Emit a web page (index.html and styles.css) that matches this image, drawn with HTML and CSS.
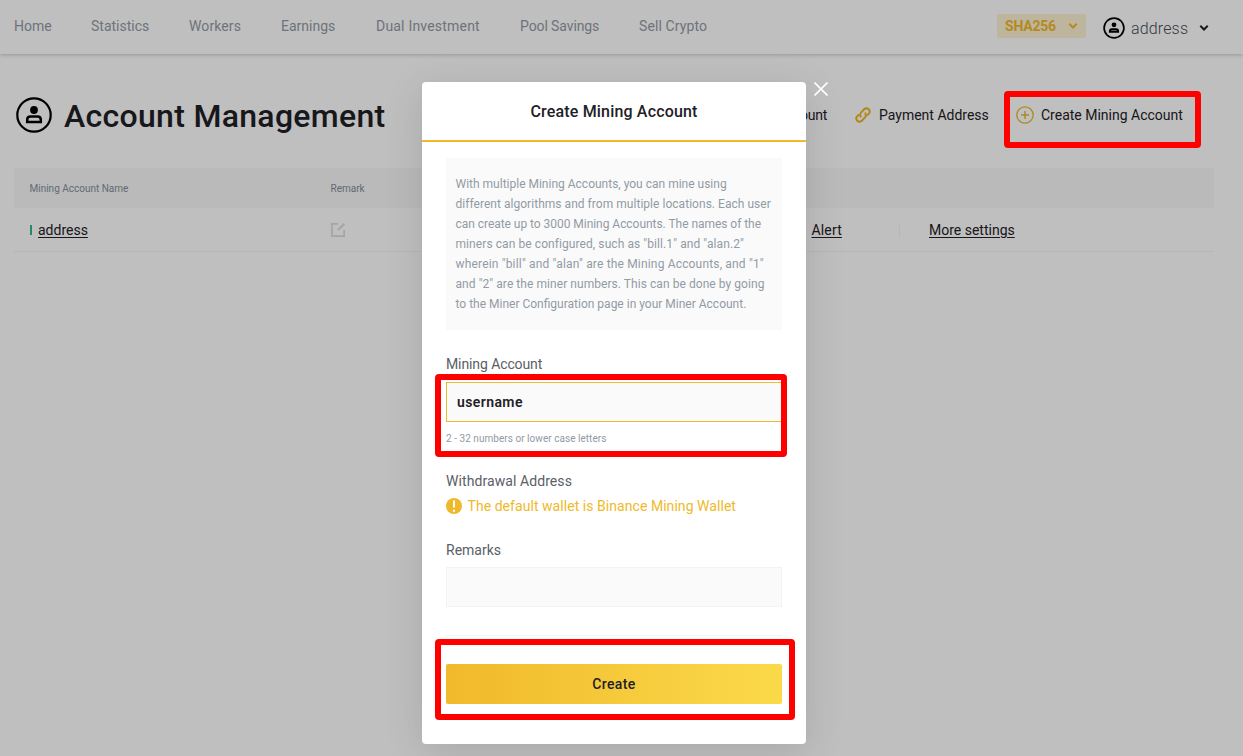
FILE: index.html
```html
<!DOCTYPE html>
<html lang="en">
<head>
<meta charset="utf-8">
<title>Account Management</title>
<link rel="stylesheet" href="styles.css">
</head>
<body>
<svg class="defs" width="0" height="0">
  <symbol id="user" viewBox="0 0 36 36"><circle cx="18" cy="18" r="16.7" fill="none" stroke="#000" stroke-width="2.2"/><circle cx="18" cy="13" r="3.9"/><path d="M11.200 24.900v-2.100c0-2 1.500-3.200 3.400-3.200h6.800c1.900 0 3.400 1.200 3.400 3.200v2.100z" fill="none" stroke="#000" stroke-width="2.500"/></symbol>
  <symbol id="user-small" viewBox="0 0 22 22"><circle cx="11" cy="11" r="9.9" fill="none" stroke="#000" stroke-width="1.7"/><circle cx="11" cy="7.800" r="2.400"/><path d="M6.900 14.800v-.6c0-1.200.9-1.900 2-1.900h4.200c1.100 0 2 .7 2 1.900v.6z" fill="none" stroke="#000" stroke-width="2"/></symbol>
  <symbol id="chevron" viewBox="0 0 10 8"><path d="M1.300 1.800 5 5.500l3.700-3.700" fill="none" stroke="currentColor" stroke-width="2"/></symbol>
</svg>
<div class="page">
  <header class="topbar">
    <nav class="nav">
      <a class="n-home">Home</a><a class="n-stat">Statistics</a><a class="n-work">Workers</a><a class="n-earn">Earnings</a><a class="n-dual">Dual Investment</a><a class="n-pool">Pool Savings</a><a class="n-sell">Sell Crypto</a>
    </nav>
    <div class="algo"><span>SHA256</span><svg width="10" height="8"><use href="#chevron"/></svg></div>
    <div class="user"><svg width="22" height="22"><use href="#user-small"/></svg><span class="user-name">address</span><svg class="user-chev" width="10" height="8"><use href="#chevron"/></svg></div>
  </header>
  <main class="main">
    <div class="heading">
      <svg width="36" height="36"><use href="#user"/></svg>
      <h1>Account Management</h1>
      <div class="actions">
        <a class="act-first">Account</a>
        <a class="act-pay"><svg width="18" height="18" viewBox="0 0 18 18" fill="none" stroke="#ecb41c" stroke-width="2"><path d="M7.200 11.200a3.400 3.400 0 0 1 0-4.800L10.400 3.100a3.200 3.200 0 0 1 4.500 4.500L12.900 9.600"/><path d="M10.800 6.800a3.400 3.400 0 0 1 0 4.800L7.600 14.900a3.200 3.200 0 0 1-4.500-4.500L5.100 8.400"/></svg><span>Payment Address</span></a>
        <a class="act-create"><svg width="18" height="18" viewBox="0 0 18 18" fill="none" stroke="#e8b931"><circle cx="9" cy="9" r="8.2" stroke-width="1.3"/><path d="M9 5v8M5 9h8" stroke-width="1.500"/></svg><span>Create Mining Account</span></a>
      </div>
    </div>
    <div class="thead"><span class="th-name">Mining Account Name</span><span class="th-remark">Remark</span></div>
    <div class="row">
      <div class="cell-name"><i class="status"></i><a class="link l-address">address</a></div>
      <div class="cell-remark"><svg width="14" height="14" viewBox="0 0 14 14" fill="none" stroke="#dcdcdc" stroke-width="1.700"><path d="M7 .9H.9v12.200h12.200V7"/><path d="m7 7 6.400-6.400" stroke-width="2"/></svg></div>
      <div class="cell-alert"><a class="link l-alert">Alert</a></div>
      <div class="cell-more"><a class="link l-more">More settings</a></div>
    </div>
  </main>
</div>
<div class="overlay">
  <section class="modal">
    <svg class="close" width="14" height="14" viewBox="0 0 14 14"><path d="m.5.500 13 13M13.500.500l-13 13" stroke="#fff" stroke-width="1.600"/></svg>
    <h2 class="modal-title"><span>Create Mining Account</span></h2>
    <div class="modal-body">
      <p class="notice"><span class="p1">With multiple Mining Accounts, you can mine using</span><span class="p2">different algorithms and from multiple locations. Each user</span><span class="p3">can create up to 3000 Mining Accounts. The names of the</span><span class="p4">miners can be configured, such as "bill.1" and "alan.2"</span><span class="p5">wherein "bill" and "alan" are the Mining Accounts, and "1"</span><span class="p6">and "2" are the miner numbers. This can be done by going</span><span class="p7">to the Miner Configuration page in your Miner Account.</span></p>
      <label class="label f-account">Mining Account</label>
      <div class="input focused"><span>username</span></div>
      <div class="hint"><span>2 - 32 numbers or lower case letters</span></div>
      <div class="label f-withdraw">Withdrawal Address</div>
      <div class="wallet"><svg width="16" height="16" viewBox="0 0 16 16"><circle cx="8" cy="8" r="8" fill="#f0b92b"/><path d="M8 2.500v7M8 11.700v2" stroke="#fff" stroke-width="2"/></svg><span>The default wallet is Binance Mining Wallet</span></div>
      <div class="label f-remarks">Remarks</div>
      <div class="input"></div>
      <div class="divider"></div>
      <button class="create"><span>Create</span></button>
    </div>
  </section>
</div>
<div class="mark mark-link"></div>
<div class="mark mark-field"></div>
<div class="mark mark-button"></div>
</body>
</html>
```
FILE: styles.css
```css
* { box-sizing: border-box; }
body { margin: 0; width: 1243px; height: 756px; overflow: hidden; position: relative; background: #fff; font-family: Roboto, "Liberation Sans", sans-serif; font-size: 14px; color: #1e2026; }
.defs { position: absolute; }
svg { display: block; flex: none; }
span, a { white-space: nowrap; }
.topbar { height: 54px; display: flex; align-items: center; padding-left: 14px; box-shadow: 0 1px 4px rgba(0,0,0,.22); }
.nav { width: 983px; display: grid; grid-template-columns: 77px 98px 92px 95px 144px 119px auto; color: #929aa5; padding-bottom: 2px; }
.n-work { letter-spacing: .1px; }
.n-dual { letter-spacing: .2px; }
.n-pool { letter-spacing: -.1px; }
.n-sell { letter-spacing: .1px; }
.algo { width: 89px; height: 24px; margin-bottom: 2px; border-radius: 2px; background: #fcf2d2; color: #f0b92b; font-weight: 700; letter-spacing: -.2px; display: flex; align-items: center; justify-content: space-between; padding: 0 8px; }
.user { display: flex; align-items: center; padding: 2px 0 0 17px; font-size: 16px; font-weight: 300; color: #474d57; }
.user-name { margin-left: 6px; width: 68px; letter-spacing: .15px; }
.user-chev { color: #1e2026; }
.main { padding: 0 29px 0 14px; }
.heading { height: 114px; display: flex; align-items: center; padding: 9px 0 0 2px; }
.heading > svg { margin-bottom: 2px; }
h1 { margin: 0 0 0 12px; width: 678px; font-size: 32px; font-weight: 500; letter-spacing: .3px; line-height: 40px; white-space: nowrap; }
.actions { display: flex; align-items: center; padding-bottom: 2px; }
.actions a { display: flex; align-items: center; }
.act-first { width: 85px; justify-content: flex-end; margin-right: 27px; letter-spacing: -.25px; }
.act-pay { width: 162px; gap: 7px; }
.act-create { gap: 7px; }
.thead { height: 40px; background: #f8f8f8; display: grid; grid-template-columns: 301px auto; align-items: center; padding-left: 15.5px; font-size: 10px; color: #848e9c; }
.row { height: 44px; border-bottom: 1px solid #f3f3f3; display: grid; grid-template-columns: 301px 480px 87px auto; align-items: center; padding-left: 16px; }
.cell-name { display: flex; align-items: center; gap: 6px; }
.status { width: 2px; height: 10px; background: #2ebd85; }
.link { text-decoration: underline; text-underline-offset: 2px; }
.l-alert { letter-spacing: .15px; }
.cell-alert { border-right: 1px solid #f3f3f3; height: 14px; line-height: 14px; width: 89px; padding-left: .5px; }
.cell-more { padding-left: 31px; }
.overlay { position: absolute; inset: 0; background: rgba(0,0,0,.25); padding: 82px 0 0 422px; }
.modal { position: relative; width: 384px; height: 662px; background: #fff; border-radius: 4px; box-shadow: 0 8px 40px rgba(0,0,0,.12); }
.close { position: absolute; left: 392px; top: 0; }
.modal-title { margin: 0; height: 60px; border-bottom: 2px solid #f0b92b; display: flex; align-items: center; justify-content: center; font-size: 16px; font-weight: 500; letter-spacing: .17px; }
.modal-body { padding: 16px 24px 0; }
.notice { margin: 0; height: 172px; background: #fafafa; padding: 16px 9.5px; font-size: 12px; line-height: 20px; color: #929aa5; display: flex; flex-direction: column; align-items: flex-start; }
.p2 { letter-spacing: .035px; }
.p3 { letter-spacing: -.04px; }
.p4 { letter-spacing: .08px; }
.p5 { letter-spacing: .17px; }
.p6 { letter-spacing: .06px; }
.label { display: flex; align-items: center; height: 20px; width: max-content; color: #5a5e66; }
.f-account { margin-top: 24px; letter-spacing: -.1px; }
.input { height: 40px; background: #fafafa; border: 1px solid #f3f3f3; display: flex; align-items: center; padding: 0 10px; margin-top: 7px; }
.focused { border-color: #f0b92b; font-weight: 600; letter-spacing: .4px; margin-top: 8px; }
.hint { height: 34px; display: flex; align-items: center; padding-bottom: 2px; font-size: 10px; letter-spacing: .04px; color: #929aa5; }
.f-withdraw { margin-top: 15px; letter-spacing: .08px; }
.wallet { height: 20px; margin-top: 5px; display: flex; align-items: center; gap: 5.5px; letter-spacing: .05px; color: #f0b92b; }
.f-remarks { margin-top: 24px; }
.divider { height: 1px; background: #f3f3f3; margin-top: 28px; }
.create { display: block; width: 336px; height: 40px; margin-top: 28px; padding: 0; border: 0; border-radius: 2px; background: linear-gradient(90deg, #f0b92b, #fbda4a); font: 500 14px Roboto, sans-serif; letter-spacing: .4px; color: #1e2026; }
.mark { position: absolute; border: 6px solid #f00; border-radius: 4px; }
.mark-link { left: 1004px; top: 91px; width: 197px; height: 57px; }
.mark-field { left: 435px; top: 374px; width: 352px; height: 83px; }
.mark-button { left: 435px; top: 639px; width: 360px; height: 81px; }
```
